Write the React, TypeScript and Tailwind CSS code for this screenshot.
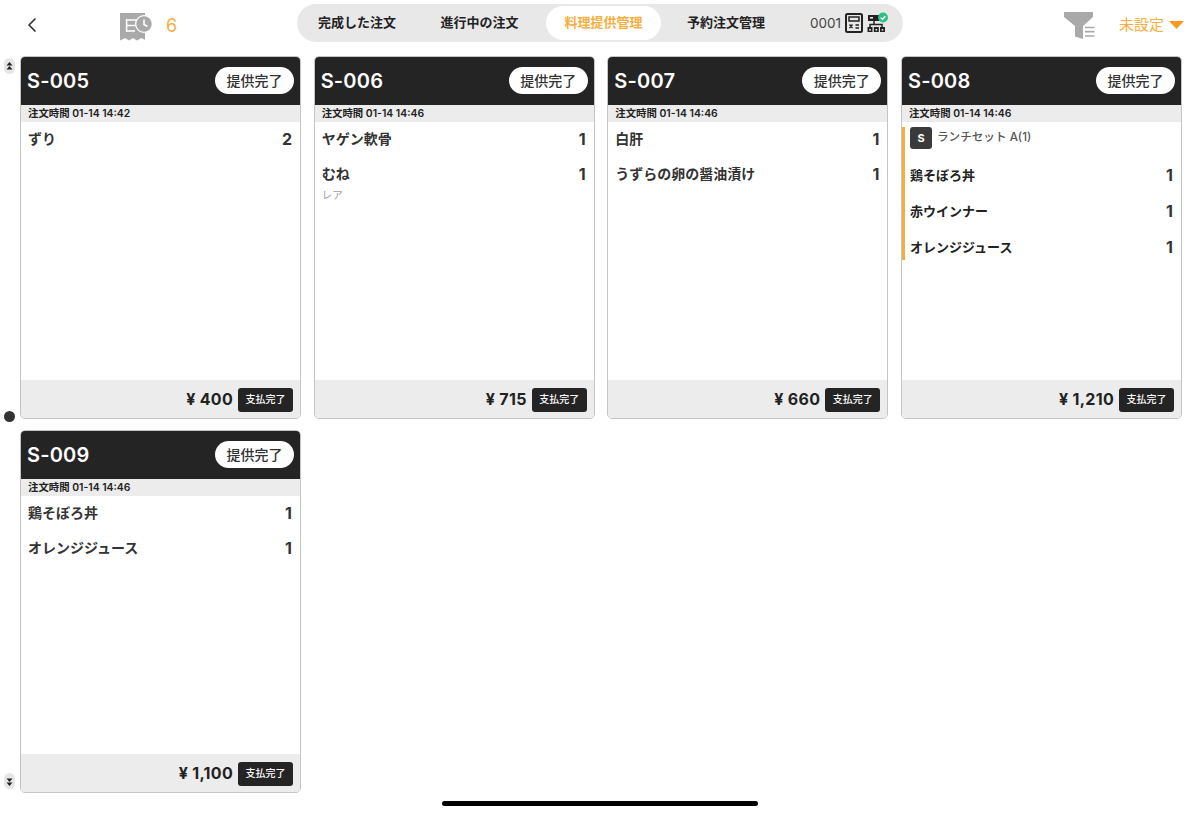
import React from 'react';
import { ChevronLeft } from 'lucide-react';

type Item = { name: string; qty: number; note?: string };
type Order = {
  id: string;
  time: string;
  total: string;
  items: Item[];
  setName?: string;
};

const orders: Order[] = [
  { id: 'S-005', time: '01-14 14:42', total: '¥ 400', items: [{ name: 'ずり', qty: 2 }] },
  {
    id: 'S-006',
    time: '01-14 14:46',
    total: '¥ 715',
    items: [
      { name: 'ヤゲン軟骨', qty: 1 },
      { name: 'むね', qty: 1, note: 'レア' },
    ],
  },
  {
    id: 'S-007',
    time: '01-14 14:46',
    total: '¥ 660',
    items: [
      { name: '白肝', qty: 1 },
      { name: 'うずらの卵の醤油漬け', qty: 1 },
    ],
  },
  {
    id: 'S-008',
    time: '01-14 14:46',
    total: '¥ 1,210',
    setName: 'ランチセット A(1)',
    items: [
      { name: '鶏そぼろ丼', qty: 1 },
      { name: '赤ウインナー', qty: 1 },
      { name: 'オレンジジュース', qty: 1 },
    ],
  },
  {
    id: 'S-009',
    time: '01-14 14:46',
    total: '¥ 1,100',
    items: [
      { name: '鶏そぼろ丼', qty: 1 },
      { name: 'オレンジジュース', qty: 1 },
    ],
  },
];

const ReceiptIcon = () => (
  <svg width="33" height="28" viewBox="0 0 33 28">
    <path d="M0 0H25V20H25V27L21.5 25L17 27.5L13 25L9 27.5L5 25L0 27.5Z" fill="#a9a9a9" />
    <path d="M6 7H18M6 12.5H15M6 18H15M6.6 6V19" stroke="#fff" strokeWidth="1.5" fill="none" />
    <circle cx="24" cy="11" r="9" fill="#fff" />
    <circle cx="24" cy="11" r="7.7" fill="#a9a9a9" />
    <path d="M24 6.5V11.5L27.5 13.5" stroke="#fff" strokeWidth="1.6" fill="none" />
  </svg>
);

const CalculatorIcon = () => (
  <svg width="18" height="20" viewBox="0 0 18 20" fill="none" stroke="#222">
    <rect x="1" y="1" width="16" height="18" rx="1.5" strokeWidth="2" />
    <rect x="4" y="4" width="10" height="4" strokeWidth="1.5" />
    <path d="M4.5 11.5L7.5 15M7.5 11.5L4.5 15M10.5 12H14M10.5 15H14" strokeWidth="1.4" />
  </svg>
);

const NetworkIcon = () => (
  <svg width="20" height="20" viewBox="0 0 20 20" className="overflow-visible">
    <rect x="1" y="2" width="12" height="6" fill="#222" />
    <rect x="3" y="4" width="3" height="1.6" fill="#e9e8e9" />
    <path d="M7 8V12M3 15V11.5H15V15" stroke="#222" strokeWidth="1.5" fill="none" />
    <rect x="0.5" y="14" width="5" height="5" fill="#222" />
    <rect x="6.8" y="14" width="5" height="5" fill="#222" />
    <rect x="13" y="14" width="5" height="5" fill="#222" />
    <rect x="2.2" y="16" width="1.6" height="1.6" fill="#e9e8e9" />
    <rect x="8.5" y="16" width="1.6" height="1.6" fill="#e9e8e9" />
    <rect x="14.7" y="16" width="1.6" height="1.6" fill="#e9e8e9" />
    <circle cx="16" cy="4.5" r="5" fill="#2fc08a" />
    <path d="M13.6 4.6L15.4 6.3L18.4 3.2" stroke="#fff" strokeWidth="1.3" fill="none" />
  </svg>
);

const FilterIcon = () => (
  <svg width="32" height="27" viewBox="0 0 32 27">
    <path d="M0 0H29V5L19 14V27L11 24.5V14L0 5Z" fill="#a9a9a9" />
    <path d="M21 15.5H30.5M21 19.7H30.5M21 24H30.5" stroke="#a9a9a9" strokeWidth="1.7" />
  </svg>
);

const ScrollPill = ({ down }: { down?: boolean }) => (
  <div className="flex h-[16px] w-[11px] items-center justify-center rounded-full bg-[#e6e6e6]">
    <svg width="7" height="9" viewBox="0 0 7 9" fill="#222" className={down ? 'rotate-180' : ''}>
      <path d="M3.5 0L6.5 3.6H.5Z" />
      <path d="M3.5 4L6.5 7.6H.5Z" />
    </svg>
  </div>
);

const PlainRow = ({ item }: { item: Item }) => (
  <div className="pb-[17px]">
    <div className="flex items-center justify-between">
      <span className="text-[14px] leading-[18px] font-bold text-[#333]">{item.name}</span>
      <span className="text-[16px] leading-[18px] font-bold text-[#333]">{item.qty}</span>
    </div>
    {item.note && <div className="mt-[5px] text-[10.5px] leading-[16px] text-[#a0a0a0]">{item.note}</div>}
  </div>
);

const SetRow = ({ item }: { item: Item }) => (
  <div className="flex h-[36px] shrink-0 items-center justify-between pl-[5px] pr-[8px]">
    <span className="text-[13px] leading-[18px] font-bold text-[#222]">{item.name}</span>
    <span className="text-[16px] leading-[18px] font-bold text-[#333]">{item.qty}</span>
  </div>
);

const OrderCard = ({ order }: { order: Order }) => (
  <div className="flex h-[363px] flex-col overflow-hidden rounded-[5px] border border-[#c4c4c4] bg-white">
    <div className="flex h-[48px] shrink-0 items-center justify-between bg-[#242424] pl-[6px] pr-[6px]">
      <span className="text-[20px] font-semibold tracking-[0.2px] text-white">{order.id}</span>
      <button className="mb-[1px] flex h-[27px] w-[79px] items-center justify-center rounded-full bg-white text-[14px] font-medium text-[#333]">
        提供完了
      </button>
    </div>
    <div className="flex h-[17px] shrink-0 items-center bg-[#ececec] pl-[7px] text-[10.4px] font-semibold text-[#222]">
      注文時間 {order.time}
    </div>
    {order.setName ? (
      <div className="mt-[5px] h-[133px] border-l-[3px] border-[#f6ae3f]">
        <div className="flex h-[22px] items-center gap-[5px] pl-[5px]">
          <span className="flex h-[22px] w-[22px] items-center justify-center rounded-[3px] bg-[#3a3a3a] text-[11px] font-bold text-white">
            S
          </span>
          <span className="text-[11.6px] font-medium text-[#555]">{order.setName}</span>
        </div>
        <div className="pt-[8px]">
          {order.items.map((item) => (
            <SetRow key={item.name} item={item} />
          ))}
        </div>
      </div>
    ) : (
      <div className="flex-1 pl-[7px] pr-[8px] pt-[8px]">
        {order.items.map((item) => (
          <PlainRow key={item.name} item={item} />
        ))}
      </div>
    )}
    <div className="mt-auto flex h-[38px] shrink-0 items-center justify-end gap-[5px] bg-[#ececec] pr-[7px]">
      <span className="text-[16px] font-bold tracking-[0.3px] text-[#222]">{order.total}</span>
      <span className="mt-[1px] flex h-[24px] w-[55px] items-center justify-center rounded-[3px] bg-[#242424] text-[10px] font-medium text-white">
        支払完了
      </span>
    </div>
  </div>
);

const tabs = [
  { label: '完成した注文', width: 'w-[112px]' },
  { label: '進行中の注文', width: 'w-[133px]' },
  { label: '料理提供管理', width: 'w-[115px]' },
  { label: '予約注文管理', width: 'w-[130px]' },
];

export default function App() {
  return (
    <div className="relative h-[815px] w-[1200px] overflow-hidden bg-white font-['Inter','Noto_Sans_CJK_JP',sans-serif]">
      {/* Top bar */}
      <div className="flex h-[46px] items-center pt-[4px]">
        <div className="flex w-[120px] pl-[20px]">
          <ChevronLeft size={24} strokeWidth={1.7} color="#333" />
        </div>
        <div className="mt-[3px]">
          <ReceiptIcon />
        </div>
        <span className="mt-[1px] ml-[13px] w-[131px] text-[18px] text-[#f6ae3f]">6</span>
        <div className="mb-[4px] flex h-[38px] w-[606px] items-center rounded-full bg-[#e9e8e9] pl-[4px]">
          {tabs.map((tab, i) => (
            <div
              key={tab.label}
              className={`flex h-[34px] items-center justify-center text-[13px] font-semibold ${tab.width} ${
                i === 2 ? 'rounded-full bg-white text-[#f6ae3f]' : 'text-[#222]'
              }`}
            >
              {tab.label}
            </div>
          ))}
          <span className="ml-[19px] text-[13.5px] text-[#444]">0001</span>
          <div className="ml-[4px] flex items-center gap-[4px]">
            <CalculatorIcon />
            <NetworkIcon />
          </div>
        </div>
        <div className="ml-[161px]">
          <FilterIcon />
        </div>
        <span className="ml-[23px] text-[15px] text-[#f6ae3f]">未設定</span>
        <svg width="15" height="8" viewBox="0 0 15 8" className="ml-[5px]">
          <path d="M0 0H15L7.5 8Z" fill="#f79a1e" />
        </svg>
      </div>

      {/* Orders */}
      <div className="flex pt-[10px]">
        <div className="flex h-[735px] w-[20px] shrink-0 flex-col items-center justify-between pt-[2px] pb-[2px] pr-[1px]">
          <ScrollPill />
          <div className="mb-[14px] h-[11px] w-[11px] rounded-full bg-[#333]" />
          <ScrollPill down />
        </div>
        <div className="grid w-[1162px] grid-cols-4 gap-x-[12.67px] gap-y-[11px] content-start">
          {orders.map((order) => (
            <OrderCard key={order.id} order={order} />
          ))}
        </div>
      </div>

      {/* Home indicator */}
      <div className="absolute bottom-[9px] left-[442px] h-[5px] w-[316px] rounded-full bg-black" />
    </div>
  );
}
